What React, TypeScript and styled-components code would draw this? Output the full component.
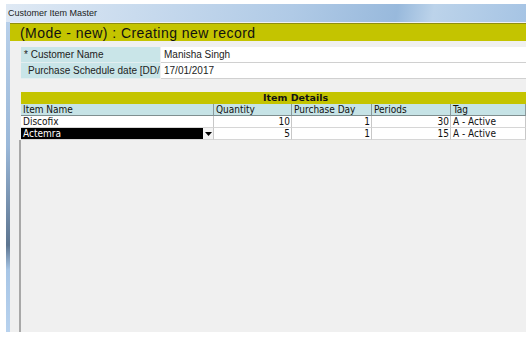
import React from "react";
import styled, { createGlobalStyle } from "styled-components";

const Global = createGlobalStyle`
  html, body { margin: 0; padding: 0; background: #ffffff; }
  body { width: 532px; height: 337px; overflow: hidden; }
`;

const Page = styled.div`
  box-sizing: border-box;
  width: 532px;
  height: 337px;
  padding: 4px 6px 5px 6px;
`;

const Window = styled.div`
  display: flex;
  flex-direction: column;
  width: 520px;
  height: 328px;
`;

const TitleBar = styled.div`
  height: 18px;
  display: flex;
  align-items: center;
  padding-left: 2px;
  font-family: "Liberation Sans", Arial, sans-serif;
  font-size: 9px;
  color: #1b1b1b;
  background: linear-gradient(100deg, #dfe9f4 0%, #c9dbee 25%, #b0cae6 55%, #98b9dc 75%, #bcd3ea 82%, #a6c4e4 100%);
`;

const Frame = styled.div`
  flex: 1;
  display: flex;
  min-height: 0;
`;

const SideBorder = styled.div`
  width: 4px;
  background: linear-gradient(180deg, #b8d0ea 0%, #9ab8d9 40%, #5d7590 72%, #a8c6e6 80%, #b8d2ee 100%);
`;

const Body = styled.div`
  flex: 1;
  display: flex;
  flex-direction: column;
  background: #f0f0f0;
  min-width: 0;
`;

const ModeBar = styled.div`
  margin-top: 1px;
  height: 18px;
  display: flex;
  align-items: center;
  padding-left: 10px;
  background: #c4c400;
  border-top: 1px solid #8f8f10;
  box-sizing: border-box;
  font-family: "Liberation Sans", Arial, sans-serif;
  font-size: 14px;
  letter-spacing: 0.45px;
  color: #111;
`;

const Form = styled.div`
  margin-top: 6px;
  padding-left: 11px;
  display: flex;
  flex-direction: column;
`;

const FormRow = styled.div`
  display: flex;
  height: 16px;
`;

const Label = styled.div<{ $indent: number }>`
  width: 139px;
  box-sizing: border-box;
  padding-left: ${(p) => p.$indent}px;
  background: #c9e5e8;
  border-bottom: 1px solid #e3eef0;
  white-space: nowrap;
  overflow: hidden;
  font-family: "Liberation Sans", Arial, sans-serif;
  font-size: 10px;
  line-height: 15px;
  color: #222;
`;

const Value = styled.div`
  flex: 1;
  margin-left: 1px;
  background: #ffffff;
  border-bottom: 1px solid #d0d0d0;
  padding-left: 3px;
  font-family: "Liberation Sans", Arial, sans-serif;
  font-size: 10px;
  line-height: 15px;
  color: #222;
`;

const GridWrap = styled.div`
  margin-top: 13px;
  margin-left: 11px;
  flex: 1;
  display: flex;
  flex-direction: column;
  font-family: "DejaVu Sans Condensed", "DejaVu Sans", sans-serif;
  font-size: 10px;
  color: #111;
`;

const GridTitle = styled.div`
  height: 12px;
  background: #c4c400;
  text-align: center;
  padding-left: 44px;
  font-family: "DejaVu Sans", sans-serif;
  font-size: 9.5px;
  font-weight: bold;
  line-height: 12px;
`;

const Table = styled.div`
  display: grid;
  grid-template-columns: 193px 78px 80px 79px 1fr;
`;

const Cell = styled.div<{ $head?: boolean; $num?: boolean }>`
  height: 12px;
  box-sizing: border-box;
  line-height: 11px;
  padding: 0 1px 0 2px;
  background: ${(p) => (p.$head ? "#c6e3e6" : "#ffffff")};
  border-right: 1px solid ${(p) => (p.$head ? "#8a9a9c" : "#c8c8c8")};
  border-bottom: 1px solid ${(p) => (p.$head ? "#7f8f90" : "#d6d6d6")};
  text-align: ${(p) => (p.$num ? "right" : "left")};
  white-space: nowrap;
  overflow: hidden;
`;

const SelectCell = styled.div`
  height: 12px;
  box-sizing: border-box;
  display: flex;
  border-right: 1px solid #c8c8c8;
  border-bottom: 1px solid #d6d6d6;
  background: #ffffff;
`;

const SelectText = styled.div`
  flex: 1;
  background: #000;
  color: #fff;
  line-height: 11px;
  padding-left: 2px;
`;

const SelectButton = styled.div`
  width: 10px;
  display: flex;
  align-items: center;
  justify-content: center;
  background: #f4f4f4;
`;

const Empty = styled.div`
  flex: 1;
  margin-left: -2px;
  border-left: 2px solid #a8a8a8;
`;

const rows = [
  { name: "Discofix", qty: "10", day: "1", per: "30", tag: "A - Active" },
  { name: "Actemra", qty: "5", day: "1", per: "15", tag: "A - Active", select: true },
];

export default function App() {
  return (
    <>
      <Global />
      <Page>
        <Window>
          <TitleBar>Customer Item Master</TitleBar>
          <Frame>
            <SideBorder />
            <Body>
              <ModeBar>(Mode - new) : Creating new record</ModeBar>
              <Form>
                <FormRow>
                  <Label $indent={3}>* Customer Name</Label>
                  <Value>Manisha Singh</Value>
                </FormRow>
                <FormRow>
                  <Label $indent={7}>Purchase Schedule date [DD/MM/YYYY]</Label>
                  <Value>17/01/2017</Value>
                </FormRow>
              </Form>
              <GridWrap>
                <GridTitle>Item Details</GridTitle>
                <Table>
                  <Cell $head>Item Name</Cell>
                  <Cell $head>Quantity</Cell>
                  <Cell $head>Purchase Day</Cell>
                  <Cell $head>Periods</Cell>
                  <Cell $head>Tag</Cell>
                  {rows.map((r) => (
                    <React.Fragment key={r.name}>
                      {r.select ? (
                        <SelectCell>
                          <SelectText>{r.name}</SelectText>
                          <SelectButton>
                            <svg width="7" height="4" viewBox="0 0 7 4">
                              <path d="M0 0 H7 L3.5 4 Z" fill="#000" />
                            </svg>
                          </SelectButton>
                        </SelectCell>
                      ) : (
                        <Cell>{r.name}</Cell>
                      )}
                      <Cell $num>{r.qty}</Cell>
                      <Cell $num>{r.day}</Cell>
                      <Cell $num>{r.per}</Cell>
                      <Cell>{r.tag}</Cell>
                    </React.Fragment>
                  ))}
                </Table>
                <Empty />
              </GridWrap>
            </Body>
          </Frame>
        </Window>
      </Page>
    </>
  );
}
